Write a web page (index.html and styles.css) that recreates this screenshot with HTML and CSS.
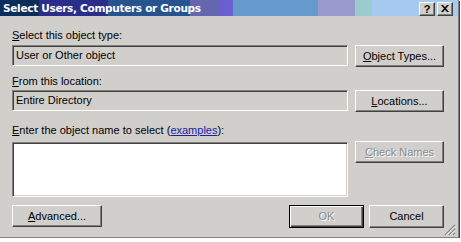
FILE: index.html
```html
<!DOCTYPE html>
<html>
<head>
<meta charset="utf-8">
<link rel="stylesheet" href="styles.css">
</head>
<body>
<div class="window">
  <div class="titlebar">
    <span class="title">Select Users, Computers or Groups</span>
    <div class="tbtns">
      <span class="tbtn">?</span>
      <span class="tbtn x">
        <svg width="8" height="7" viewBox="0 0 8 7"><path d="M0 0h2l2 2.2L6 0h2L5 3.5 8 7H6L4 4.8 2 7H0l3-3.5z" fill="#000"/></svg>
      </span>
    </div>
  </div>
  <div class="content">
    <div class="label l1"><u>S</u>elect this object type:</div>
    <div class="row">
      <div class="field">User or Other object</div>
      <button class="btn"><u>O</u>bject Types...</button>
    </div>
    <div class="label l2"><u>F</u>rom this location:</div>
    <div class="row">
      <div class="field">Entire Directory</div>
      <button class="btn"><u>L</u>ocations...</button>
    </div>
    <div class="label l3"><u>E</u>nter the object name to select (<a class="link">examples</a>):</div>
    <div class="row top">
      <div class="area"></div>
      <button class="btn disabled"><u>C</u>heck Names</button>
    </div>
    <div class="bottom">
      <button class="btn adv"><u>A</u>dvanced...</button>
      <div class="right">
        <button class="btn small default disabled">OK</button>
        <button class="btn small">Cancel</button>
      </div>
    </div>
  </div>
  <div class="grip">
    <svg width="12" height="12" viewBox="0 0 12 12">
      <path d="M11 1L1 11M11 5L5 11M11 9L9 11" stroke="#808080" stroke-width="1.2"/>
      <path d="M11 2.4L2.4 11M11 6.4L6.4 11M11 10.4L10.4 11" stroke="#fff" stroke-width="0.9"/>
    </svg>
  </div>
</div>
</body>
</html>
```

FILE: styles.css
```css
html, body {
  margin: 0;
  padding: 0;
  background: #ffffff;
}
body {
  font-family: "Liberation Sans", Arial, sans-serif;
  font-size: 11px;
  color: #000;
}
.window {
  position: relative;
  width: 458px;
  height: 237px;
  background: #d0cfcc;
  border-right: 1px solid #808080;
  border-bottom: 1px solid #808080;
  box-shadow: 1px 1px 0 #404040;
  display: flex;
  flex-direction: column;
}
.titlebar {
  height: 16px;
  display: flex;
  align-items: center;
  justify-content: space-between;
  background: linear-gradient(to right,
    #0b2d5c 0, #0b2d5c 39px,
    #2a2d8a 39px, #2a2d8a 108px,
    #27548e 108px, #27548e 190px,
    #6566b0 190px, #6566b0 220px,
    #6a5fd0 220px, #6a5fd0 233px,
    #6699cc 233px, #6699cc 318px,
    #9a99cc 318px, #9a99cc 355px,
    #99cccc 355px, #99cccc 372px,
    #a6caf0 372px, #a6caf0 100%);
}
.title {
  color: #fff;
  font-family: "DejaVu Sans", Verdana, sans-serif;
  font-weight: bold;
  font-size: 10.5px;
  letter-spacing: -0.3px;
  padding-left: 3px;
  line-height: 16px;
}
.tbtns {
  display: flex;
  gap: 2px;
  padding-right: 5px;
  padding-top: 1px;
}
.tbtn {
  width: 12px;
  height: 10px;
  background: #d0cfcc;
  border: 1px solid;
  border-color: #fff #404040 #404040 #fff;
  box-shadow: inset -1px -1px 0 #808080;
  display: flex;
  align-items: center;
  justify-content: center;
  font-weight: bold;
  font-size: 11px;
  line-height: 10px;
  padding: 1px 1px;
}
.content {
  flex: 1;
  padding: 0 14px 0 12px;
  display: flex;
  flex-direction: column;
}
.label {
  line-height: 13px;
  height: 13px;
}
.l1 { margin-top: 13px; margin-bottom: 3px; }
.l2 { margin-top: 8px; margin-bottom: 2px; }
.l3 { margin-top: 12px; margin-bottom: 4px; }
.link {
  color: #1a22a6;
  text-decoration: underline;
}
.row {
  display: flex;
  gap: 7px;
  align-items: flex-start;
}
.field, .area {
  width: 336px;
  box-sizing: border-box;
  border: 1px solid;
  border-color: #808080 #fff #fff #808080;
  box-shadow: inset 1px 1px 0 #404040, inset -1px -1px 0 #d4d0c8;
}
.field {
  height: 21px;
  line-height: 19px;
  padding-left: 3px;
  background: #d0cfcc;
}
.area {
  height: 55px;
  background: #fff;
  margin-top: 1px;
}
.btn {
  box-sizing: border-box;
  width: 89px;
  height: 22px;
  margin: 0;
  padding: 0;
  font-family: "Liberation Sans", Arial, sans-serif;
  font-size: 11px;
  color: #000;
  background: #d0cfcc;
  border: 1px solid;
  border-color: #fff #404040 #404040 #fff;
  box-shadow: inset -1px -1px 0 #808080;
  text-align: center;
  line-height: 19px;
}
.btn.disabled {
  color: #8a8a8a;
  text-shadow: 1px 1px 0 #fff;
}
.bottom {
  display: flex;
  justify-content: space-between;
  margin-top: 8px;
}
.adv {
  width: 90px;
}
.right {
  display: flex;
  gap: 5px;
}
.btn.small {
  width: 75px;
  height: 23px;
}
.btn.default {
  border: 1px solid #000;
  box-shadow: inset 1px 1px 0 #fff, inset -1px -1px 0 #404040, inset -2px -2px 0 #808080;
}
.grip {
  position: absolute;
  right: 2px;
  bottom: 1px;
  width: 12px;
  height: 12px;
}
```
